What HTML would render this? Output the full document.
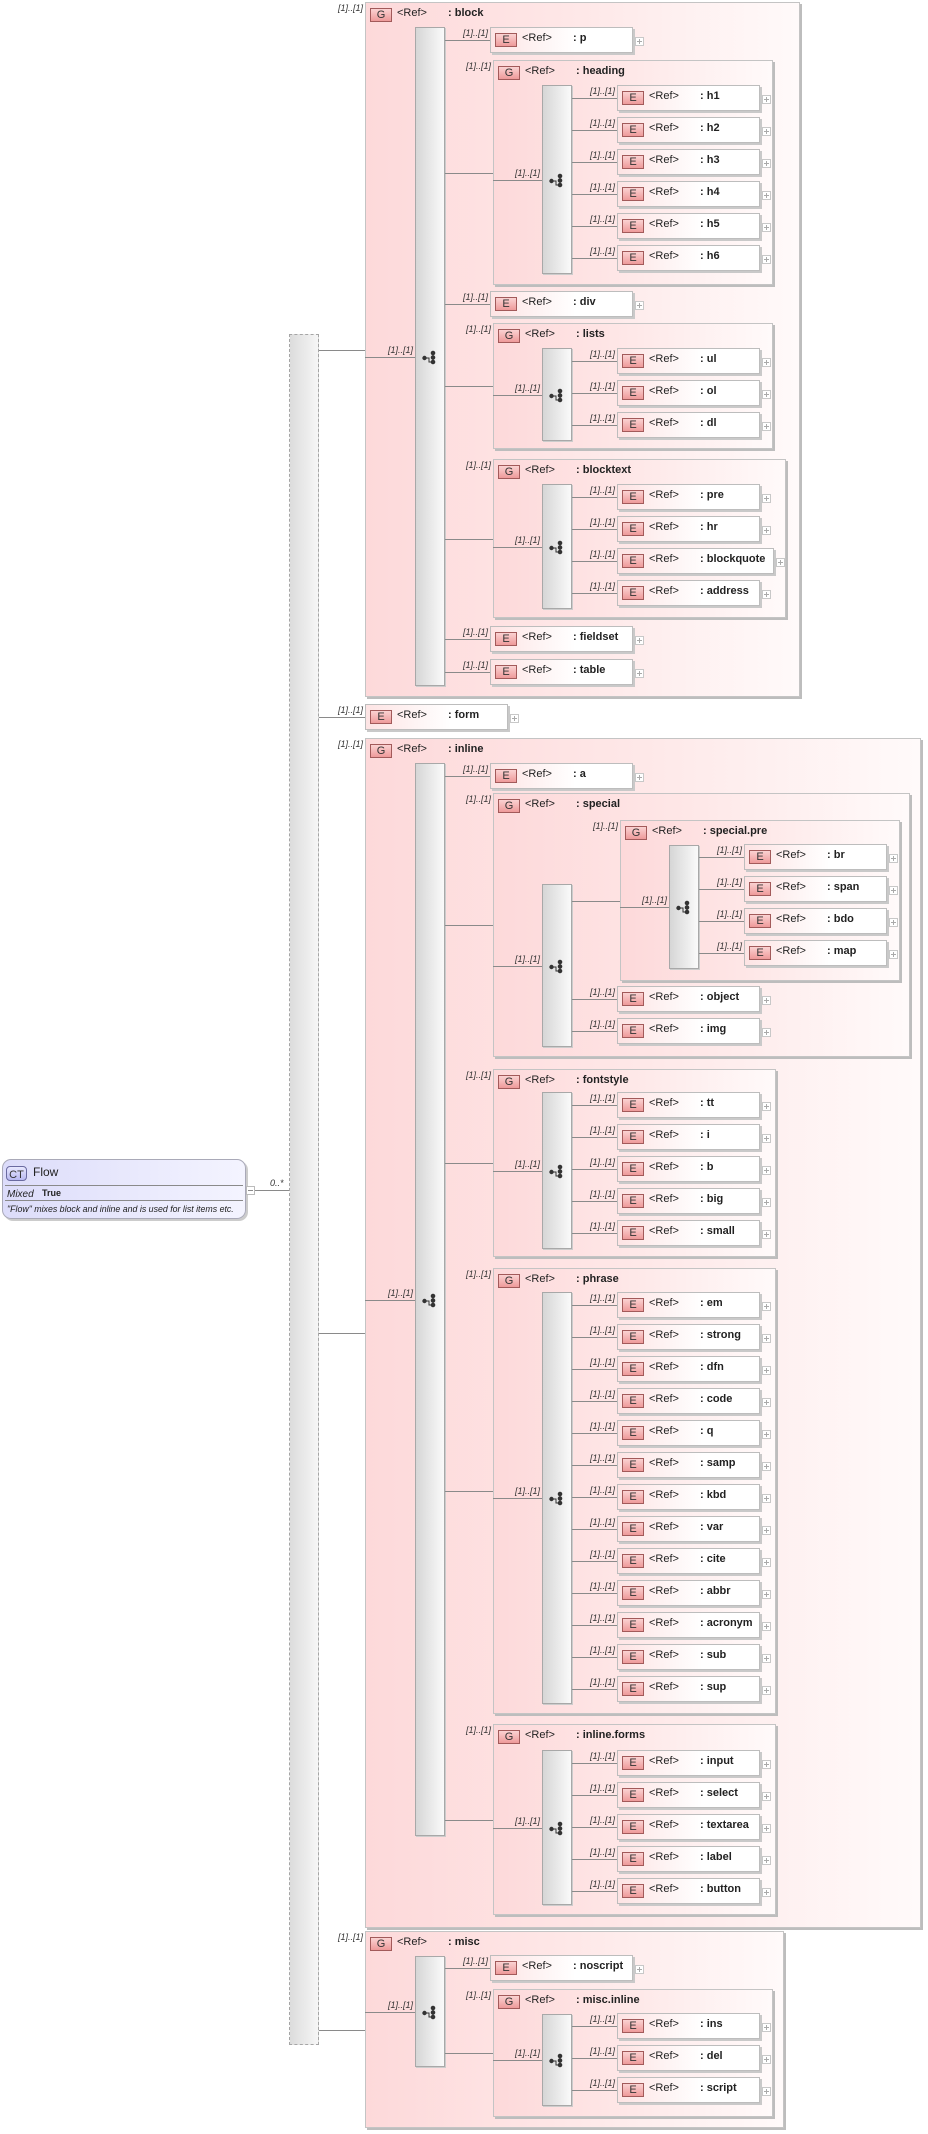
<!DOCTYPE html>
<html><head><meta charset="utf-8">
<style>
*{box-sizing:border-box;margin:0;padding:0}
body{width:928px;height:2134px;position:relative;background:#fff;font-family:"Liberation Sans",sans-serif;overflow:hidden}
div,span{position:absolute}
.g{border:1px solid #c4c4c4;background:linear-gradient(to right,#fdd9da 0%,#fee8e8 50%,#fffafa 100%);box-shadow:2px 2px 0 #bdbdbd}
.e{height:26px;border:1px solid #bdbdbd;background:linear-gradient(to right,#fde4e4,#fff 60%);box-shadow:2px 2px 0 #c9c9c9}
.b{width:22px;height:14px;border:1px solid #a25a5a;background:linear-gradient(#fbd2d2,#ee9a9a);font-size:11px;text-align:center;line-height:12px;color:#333}
.t{font-size:11px;color:#222;white-space:nowrap;line-height:13px}
.n{font-weight:bold}
.m{font-size:9px;font-style:italic;color:#333;white-space:nowrap;line-height:10px}
.bar{width:30px;border:1px solid #a8a8a8;background:linear-gradient(to right,#d6d6d6,#fafafa);box-shadow:1px 1px 0 #ccc}
.l{height:1px;background:#8a8a8a}
.p{width:9px;height:9px;border:1px solid #c8c8c8;background:#fff}
.p:before{content:"";position:absolute;left:1px;top:3px;width:5px;height:1px;background:#aaa}
.p:after{content:"";position:absolute;left:3px;top:1px;width:1px;height:5px;background:#aaa}
</style></head><body>
<div id="r"></div>
<script>
var h='';
var ICON='<svg width="16" height="16" viewBox="0 0 16 16"><g fill="#333" stroke="#333" stroke-width="1"><circle cx="2.5" cy="9" r="1.7"/><path d="M2.5 9H7V13H11M11 4V13" fill="none"/><circle cx="11" cy="4" r="1.8"/><circle cx="11" cy="8.5" r="1.8"/><circle cx="11" cy="13" r="1.8"/></g></svg>';
function d(cls,x,y,w,hh,inner,st){h+='<div class="'+cls+'" style="left:'+x+'px;top:'+y+'px;'+(w!=null?'width:'+w+'px;':'')+(hh!=null?'height:'+hh+'px;':'')+(st||'')+'">'+(inner||'')+'</div>';}
function line(x1,y,x2){d('l',x1,y,x2-x1,1);}
function mult(xr,y){d('m',xr-40,y,38,null,'[1]..[1]','text-align:right');}
function E(x,y,name,barR,w){w=w||143;
 if(barR!=null){line(barR,y+13,x);mult(x,y+1);}
 d('e',x,y,w,26);
 d('b',x+5,y+6,22,14,'E');
 d('t',x+32,y+5,null,null,'&lt;Ref&gt;');
 d('t n',x+83,y+5,null,null,': '+name);
 d('p',x+w+2,y+10,9,9);
}
function bar(x,y,y2){d('bar',x,y,30,y2-y);d('',x+7,Math.round((y+y2)/2)-8,16,16,ICON);}
function G(x,y,x2,y2,name,barR,bx,by,by2){
 if(barR!=null){line(barR,Math.round((y+y2)/2),x);mult(x,y+1);}
 d('g',x,y,x2-x,y2-y);
 d('b',x+5,y+6,22,14,'G');
 d('t',x+32,y+5,null,null,'&lt;Ref&gt;');
 d('t n',x+83,y+5,null,null,': '+name);
 var c=Math.round((by+by2)/2);
 line(x,c,bx);mult(bx,c-12);
 bar(bx,by,by2);
 return bx+30;
}
/* root */
d('',2,1159,244,60,'','border:1px solid #a9a9b8;border-radius:9px;background:linear-gradient(to right,#dcdcfa,#f4f4ff);box-shadow:2px 2px 0 #ccc');
d('',6,1166,21,15,'<span style="position:static;font-size:11px;color:#333">CT</span>','border:1px solid #6a6aa0;border-radius:4px;background:linear-gradient(#e8e8ff,#b8b8f0);text-align:center;line-height:13px');
d('t',33,1166,null,null,'Flow','font-size:12px');
line(5,1185,243);
d('t',7,1188,null,null,'Mixed','font-style:italic;font-size:10px');
d('t n',42,1187,null,null,'True','font-size:9px');
line(5,1200,243);
d('t',7,1203,null,null,'"Flow" mixes block and inline and is used for list items etc.','font-style:italic;font-size:8.8px');
d('',246,1186,9,9,'','border:1px solid #bbb;background:#fff');
d('l',248,1190,5,1);
line(255,1190,289);
d('m',270,1178,20,null,'0..*');
d('',296,1183,16,16,ICON);
/* outer bar */
d('',289,334,30,1711,'','border:1px dashed #a5a5a5;background:linear-gradient(to right,#dcdcdc,#f6f6f6)');
var R0=319;
var b=G(365,2,800,697,'block',R0,415,27,686);
E(490,27,'p',b);
var hb=G(493,60,773,285,'heading',b,542,85,274);
['h1','h2','h3','h4','h5','h6'].forEach(function(n,i){E(617,85+32*i,n,hb);});
E(490,291,'div',b);
var lb=G(493,323,773,449,'lists',b,542,348,441);
['ul','ol','dl'].forEach(function(n,i){E(617,348+32*i,n,lb);});
var tb=G(493,459,786,618,'blocktext',b,542,484,609);
E(617,484,'pre',tb);E(617,516,'hr',tb);E(617,548,'blockquote',tb,157);E(617,580,'address',tb);
E(490,626,'fieldset',b);
E(490,659,'table',b);
E(365,704,'form',R0);
var ib=G(365,738,921,1928,'inline',R0,415,763,1836);
E(490,763,'a',ib);
var sb=G(493,793,910,1057,'special',ib,542,884,1047);
var pb=G(620,820,900,981,'special.pre',sb,669,845,969);
['br','span','bdo','map'].forEach(function(n,i){E(744,844+32*i,n,pb);});
E(617,986,'object',sb);E(617,1018,'img',sb);
var fb=G(493,1069,776,1257,'fontstyle',ib,542,1092,1249);
['tt','i','b','big','small'].forEach(function(n,i){E(617,1092+32*i,n,fb);});
var phb=G(493,1268,776,1714,'phrase',ib,542,1292,1704);
['em','strong','dfn','code','q','samp','kbd','var','cite','abbr','acronym','sub','sup'].forEach(function(n,i){E(617,1292+32*i,n,phb);});
var ifb=G(493,1724,776,1915,'inline.forms',ib,542,1750,1905);
['input','select','textarea','label','button'].forEach(function(n,i){E(617,1750+32*i,n,ifb);});
var mb=G(365,1931,784,2128,'misc',R0,415,1956,2067);
E(490,1955,'noscript',mb);
var mib=G(493,1989,773,2117,'misc.inline',mb,542,2014,2106);
['ins','del','script'].forEach(function(n,i){E(617,2013+32*i,n,mib);});
document.getElementById('r').innerHTML=h;
</script>
</body></html>
